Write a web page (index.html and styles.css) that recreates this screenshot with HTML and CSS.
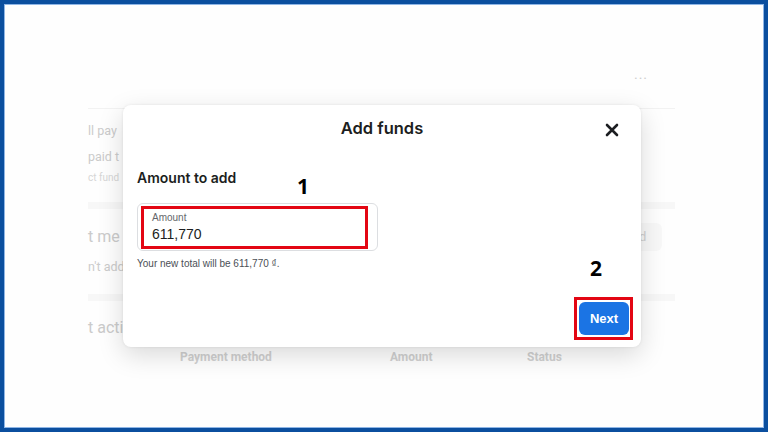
FILE: index.html
```html
<!DOCTYPE html>
<html>
<head>
<meta charset="utf-8">
<link rel="stylesheet" href="styles.css">
</head>
<body>
<div class="frame">
  <div class="sheet">
    <div class="topbar"><span class="dots">···</span></div>
    <div class="row r1">ll pay</div>
    <div class="row r2">paid t</div>
    <div class="row r3">ct fund</div>
    <div class="bar"></div>
    <div class="row r4"><span>t me</span><span class="ghost-btn">d</span></div>
    <div class="row r5">n't add</div>
    <div class="bar bar2"></div>
    <div class="row r6">t acti</div>
    <div class="cols"><span class="c1">Payment method</span><span class="c2">Amount</span><span class="c3">Status</span></div>
  </div>

  <div class="modal">
    <div class="modal-head">
      <span></span>
      <h1 class="title">Add funds</h1>
      <button class="close" aria-label="Close">
        <svg width="14" height="14" viewBox="0 0 14 14"><path d="M2 2 L12 12 M12 2 L2 12" stroke="#1c1e21" stroke-width="2.6" stroke-linecap="round"/></svg>
      </button>
    </div>
    <div class="modal-body">
      <h2 class="sub">Amount to add</h2>
      <div class="field">
        <span class="field-label">Amount</span>
        <span class="field-value">611,770</span>
        <span class="mark mark-field"></span>
      </div>
      <p class="helper">Your new total will be 611,770 ₫.</p>
      <span class="num num1">1</span>
    </div>
    <div class="modal-foot">
      <span class="num num2">2</span>
      <span class="mark-btn"><button class="next">Next</button></span>
    </div>
  </div>
</div>
</body>
</html>
```

FILE: styles.css
```css
html, body {
  margin: 0;
  padding: 0;
  background: #ffffff;
}
.frame {
  position: relative;
  width: 768px;
  height: 432px;
  box-sizing: border-box;
  border: 4px solid #0b4f9f;
  box-shadow: inset 0 0 0 1px #8fb6e6;
  background: #fefefe;
  overflow: hidden;
  font-family: Roboto, "Liberation Sans", sans-serif;
}
.sheet {
  margin: 67px 0 0 84px;
  width: 587px;
  color: #cbcbcb;
  font-size: 12.5px;
}
.topbar {
  height: 38px;
  border-bottom: 1px solid #f2f2f2;
  display: flex;
  justify-content: flex-end;
  padding-right: 27px;
  box-sizing: border-box;
}
.dots {
  font-size: 14px;
  line-height: 16px;
  color: #cdcdcd;
  letter-spacing: 1px;
}
.row {
  line-height: 16px;
  white-space: nowrap;
}
.r1 { margin-top: 14px; }
.r2 { margin-top: 10px; }
.r3 { margin-top: 5px; font-size: 10px; color: #d6d6d6; }
.bar {
  height: 7px;
  background: #f7f7f7;
  margin-top: 16px;
}
.r4 {
  margin-top: 14px;
  font-size: 16px;
  line-height: 28px;
  display: flex;
  justify-content: space-between;
  align-items: center;
}
.ghost-btn {
  width: 37px;
  height: 28px;
  margin-right: 13px;
  background: #f8f8f8;
  border-radius: 6px;
  font-size: 13px;
  line-height: 28px;
  text-indent: 14px;
  color: #d0d0d0;
}
.r5 { margin-top: 8px; }
.bar2 { margin-top: 19px; }
.r6 { margin-top: 17px; font-size: 16px; line-height: 20px; }
.cols {
  margin-top: 11px;
  display: flex;
  font-weight: 700;
  font-size: 12px;
  color: #d0d0d0;
  line-height: 16px;
}
.c1 { margin-left: 92px; width: 210px; }
.c2 { width: 137px; }

.modal {
  position: absolute;
  left: 119px;
  top: 101px;
  width: 518px;
  height: 242px;
  background: #ffffff;
  border-radius: 8px;
  box-shadow: 0 8px 26px rgba(0, 0, 0, 0.15), 0 0 3px rgba(0, 0, 0, 0.08);
  display: flex;
  flex-direction: column;
  font-family: "Liberation Sans", Arial, sans-serif;
  color: #1c1e21;
}
.modal-head {
  height: 46px;
  display: grid;
  grid-template-columns: 1fr auto 1fr;
  align-items: center;
}
.title {
  margin: 0;
  font-family: Inter, "Liberation Sans", sans-serif;
  font-size: 16.5px;
  font-weight: 600;
  color: #1c1e21;
}
.close {
  justify-self: end;
  margin-right: 21px;
  margin-top: 4px;
  width: 16px;
  height: 16px;
  padding: 0;
  border: 0;
  background: none;
  display: flex;
  align-items: center;
  justify-content: center;
}
.modal-body {
  position: relative;
  padding: 17px 14px 0;
  flex: 1;
}
.sub {
  margin: 0;
  font-family: Inter, "Liberation Sans", sans-serif;
  font-size: 14px;
  font-weight: 600;
  line-height: 20px;
  color: #1c1e21;
}
.field {
  position: relative;
  margin-top: 15px;
  width: 241px;
  height: 48px;
  box-sizing: border-box;
  border: 1px solid #dcdee1;
  border-radius: 6px;
  padding: 8px 14px 0;
  display: flex;
  flex-direction: column;
}
.field-label {
  font-size: 10px;
  line-height: 12px;
  color: #65676b;
}
.field-value {
  font-size: 14px;
  line-height: 18px;
  margin-top: 1px;
  color: #1c1e21;
}
.mark {
  position: absolute;
  border: 3px solid #e30613;
  box-sizing: border-box;
}
.mark-field {
  left: 3px;
  top: 2px;
  width: 227px;
  height: 43px;
}
.helper {
  margin: 6px 0 0;
  font-size: 10px;
  line-height: 14px;
  color: #4b4f56;
}
.num {
  position: absolute;
  font-family: "Open Sans", "Liberation Sans", sans-serif;
  font-weight: 700;
  font-size: 21px;
  line-height: 24px;
  color: #000000;
}
.num1 { left: 174px; top: 23px; }
.modal-foot {
  position: relative;
  display: flex;
  justify-content: flex-end;
  padding: 0 8px 7px 0;
}
.num2 { right: 39px; top: -41px; }
.mark-btn {
  display: flex;
  padding: 2px 1px 2px 2px;
  border: 3px solid #e30613;
}
.next {
  width: 50px;
  height: 33px;
  border: 0;
  border-radius: 6px;
  background: #1b74e4;
  color: #ffffff;
  font-family: "Liberation Sans", Arial, sans-serif;
  font-weight: 700;
  font-size: 13px;
}
```
